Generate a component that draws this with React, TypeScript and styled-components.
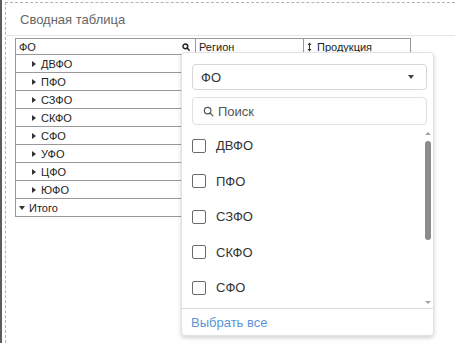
import styled, { createGlobalStyle } from 'styled-components';

const GlobalStyle = createGlobalStyle`
  html, body {
    margin: 0;
    padding: 0;
    background: #fff;
    font-family: "Liberation Sans", Arial, sans-serif;
  }
  * { box-sizing: border-box; }
`;

const regions = ['ДВФО', 'ПФО', 'СЗФО', 'СКФО', 'СФО', 'УФО', 'ЦФО', 'ЮФО'];
const visibleOptions = regions.slice(0, 5);

const SearchGlyph = ({ size = 10, stroke = '#222', width = 2 }) => (
  <svg width={size} height={size} viewBox="0 0 10 10" fill="none">
    <circle cx="4.2" cy="4.2" r="3" stroke={stroke} strokeWidth={width} />
    <path d="M6.4 6.4 L9 9" stroke={stroke} strokeWidth={width} strokeLinecap="round" />
  </svg>
);

const SortGlyph = () => (
  <svg width="5" height="10" viewBox="0 0 5 10" fill="none">
    <path d="M2.5 1 V9" stroke="#333" strokeWidth="1" />
    <path d="M0.5 3 L2.5 0.5 L4.5 3 Z M0.5 7 L2.5 9.5 L4.5 7 Z" fill="#333" />
  </svg>
);

export default function App() {
  return (
    <Screen>
      <GlobalStyle />
      <Panel>
        <TitleBar>Сводная таблица</TitleBar>
        <TableArea>
          <HeadRow>
            <HeadCell $w={180}>
              <span>ФО</span>
              <HeadIcon>
                <SearchGlyph size={8} width={1.8} />
              </HeadIcon>
            </HeadCell>
            <HeadCell $w={108}>Регион</HeadCell>
            <HeadCell $w={108} $last>
              <SortGlyph />
              <span>Продукция</span>
            </HeadCell>
          </HeadRow>
          {regions.map(r => (
            <Row key={r}>
              <Expander $indent={16} $open={false} />
              {r}
            </Row>
          ))}
          <Row>
            <Expander $indent={3} $open />
            Итого
          </Row>
        </TableArea>
      </Panel>

      <Popup>
        <Controls>
          <Select>
            <span>ФО</span>
            <Caret />
          </Select>
          <SearchBox>
            <SearchGlyph size={11} stroke="#555" width={1.1} />
            <span>Поиск</span>
          </SearchBox>
        </Controls>
        <ListArea>
          <Items>
            {visibleOptions.map(r => (
              <Item key={r}>
                <Check />
                <span>{r}</span>
              </Item>
            ))}
          </Items>
          <Scrollbar>
            <ScrollArrow $up />
            <Thumb />
            <Spacer />
            <ScrollArrow />
          </Scrollbar>
        </ListArea>
        <Footer>
          <SelectAll>Выбрать все</SelectAll>
        </Footer>
      </Popup>
    </Screen>
  );
}

const Screen = styled.div`
  position: relative;
  width: 455px;
  height: 343px;
  border-left: 2px solid #5c5c5c;
  overflow: hidden;
`;

const Panel = styled.div`
  margin: 2px 0 0 3px;
  height: 341px;
  border-left: 1px dashed #b3b3b3;
  border-top: 1px dashed #b3b3b3;
`;

const TitleBar = styled.div`
  height: 33px;
  padding-left: 14px;
  display: flex;
  align-items: center;
  font-size: 13px;
  color: #666;
  border-bottom: 1px solid #e6e6e6;
`;

const TableArea = styled.div`
  padding: 2px 0 0 9px;
  font-size: 11px;
  color: #222;
`;

const HeadRow = styled.div`
  display: flex;
  height: 17px;
`;

const HeadCell = styled.div<{ $w: number; $last?: boolean }>`
  width: ${p => p.$w}px;
  height: 17px;
  display: flex;
  align-items: center;
  gap: 5px;
  padding-left: 3px;
  border: 1px solid #999;
  border-right: ${p => (p.$last ? '1px solid #999' : 'none')};
  > span:first-child { flex: ${p => (p.$last ? 'none' : '1')}; }
`;

const HeadIcon = styled.span`
  display: flex;
  align-items: center;
  padding-right: 5px;
`;

const Row = styled.div`
  width: 180px;
  height: 18px;
  display: flex;
  align-items: center;
  border: 1px solid #999;
  border-top: none;
  font-size: 11px;
  color: #222;
`;

const Expander = styled.span<{ $indent: number; $open: boolean }>`
  width: 0;
  height: 0;
  margin-left: ${p => p.$indent}px;
  margin-right: ${p => (p.$open ? 4 : 5)}px;
  border-style: solid;
  border-color: transparent;
  ${p =>
    p.$open
      ? 'border-width: 4px 3px 0 3px; border-top-color: #333;'
      : 'border-width: 3px 0 3px 4px; border-left-color: #333;'}
`;

const Popup = styled.div`
  position: absolute;
  left: 179px;
  top: 52px;
  width: 253px;
  height: 284px;
  background: #fff;
  border: 1px solid #e2e2e2;
  border-radius: 4px;
  box-shadow: 0 2px 4px rgba(0, 0, 0, 0.18);
  display: flex;
  flex-direction: column;
`;

const Controls = styled.div`
  padding: 11px 6px 0 10px;
  display: flex;
  flex-direction: column;
  gap: 7px;
`;

const Select = styled.div`
  height: 26px;
  border: 1px solid #d6d6d6;
  border-radius: 4px;
  display: flex;
  align-items: center;
  justify-content: space-between;
  padding: 0 12px 0 8px;
  font-size: 13px;
  color: #333;
`;

const Caret = styled.span`
  width: 0;
  height: 0;
  border-style: solid;
  border-color: #444 transparent transparent transparent;
  border-width: 4px 3.5px 0 3.5px;
`;

const SearchBox = styled.div`
  height: 28px;
  border: 1px solid #e0e0e0;
  border-radius: 4px;
  display: flex;
  align-items: center;
  gap: 4px;
  padding-left: 10px;
  font-size: 13px;
  color: #555;
`;

const ListArea = styled.div`
  margin-top: 3px;
  height: 180px;
  display: flex;
`;

const Items = styled.div`
  flex: 1;
  overflow: hidden;
  padding-left: 10px;
`;

const Item = styled.div`
  height: 35.5px;
  display: flex;
  align-items: center;
  gap: 10px;
  font-size: 13px;
  color: #333;
`;

const Check = styled.span`
  width: 14px;
  height: 14px;
  border: 1.5px solid #6b6b6b;
  border-radius: 2px;
`;

const Scrollbar = styled.div`
  width: 8px;
  margin-right: 1px;
  display: flex;
  flex-direction: column;
  align-items: center;
  padding: 4px 0 4px;
`;

const ScrollArrow = styled.span<{ $up?: boolean }>`
  width: 0;
  height: 0;
  border-style: solid;
  border-color: transparent;
  ${p =>
    p.$up
      ? 'border-width: 0 3px 3px 3px; border-bottom-color: #a3a3a3;'
      : 'border-width: 3px 3px 0 3px; border-top-color: #a3a3a3;'}
`;

const Thumb = styled.span`
  margin-top: 6px;
  width: 6px;
  height: 99px;
  border-radius: 3px;
  background: #8b8b8b;
`;

const Spacer = styled.span`
  flex: 1;
`;

const Footer = styled.div`
  flex: 1;
  border-top: 1px solid #dcdcdc;
  display: flex;
  align-items: center;
  padding-left: 9px;
`;

const SelectAll = styled.span`
  font-size: 13px;
  color: #5b95d6;
`;
